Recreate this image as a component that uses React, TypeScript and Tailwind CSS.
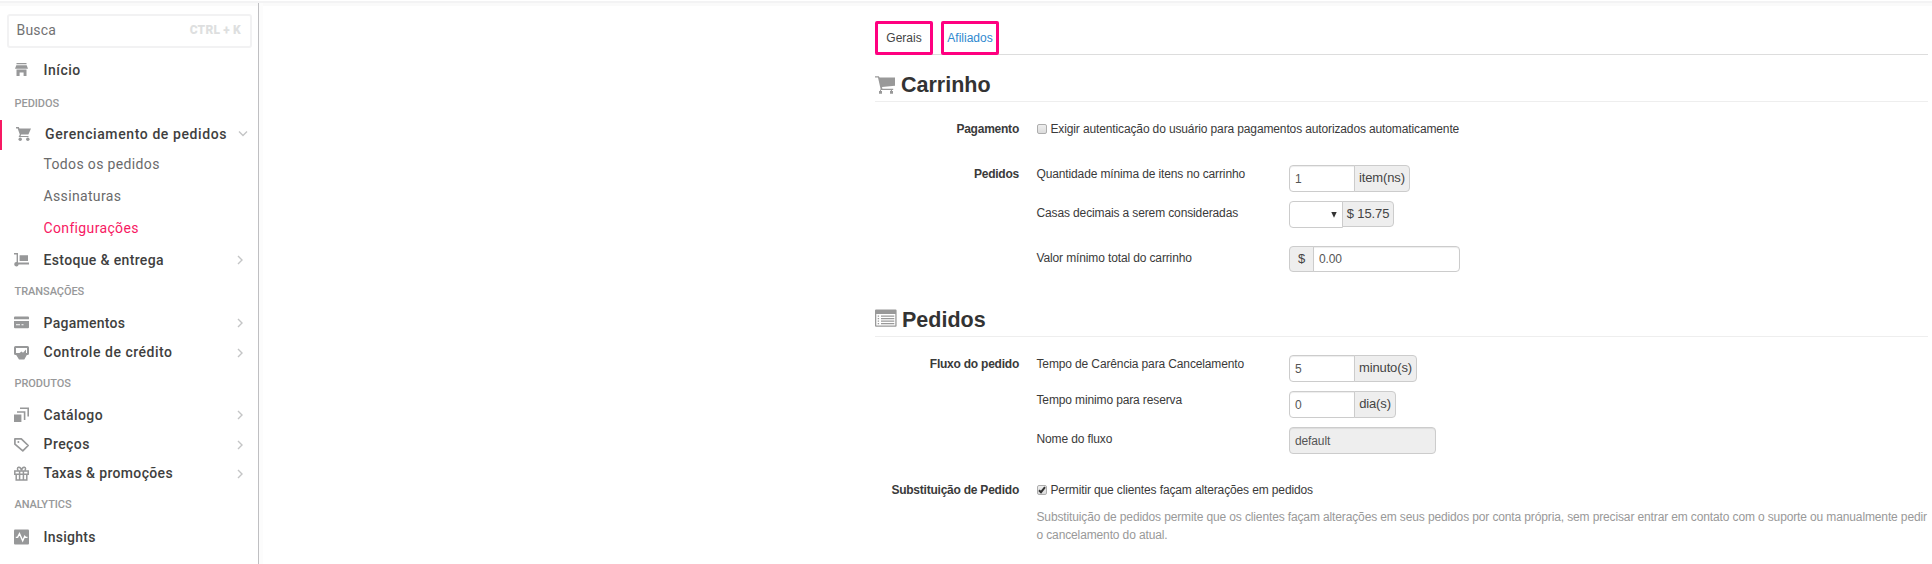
import React from "react";

type IconProps = { children: React.ReactNode };

function Icon({ children }: IconProps) {
  return (
    <svg width="16" height="16" viewBox="0 0 16 16" fill="#979899" className="shrink-0">
      {children}
    </svg>
  );
}

const HomeIcon = (
  <Icon>
    <path d="M2.500 1h10v1.300h-10zM2.300 3.200h10.400l1.300 3.600H1zM2.500 7.600h10V14H9.600v-3.400H5.600V14H2.500z" />
  </Icon>
);
const CartIcon = (
  <Icon>
    <path d="M1 1h2.800l.6 1.600H16l-2.600 5.800H6.200l-.7 1.600h8V11H3.600l1.200-2.600L2.700 2.400H1z" />
    <circle cx="5.200" cy="13.200" r="1.700" />
    <circle cx="12.800" cy="13.200" r="1.700" />
  </Icon>
);
const TrolleyIcon = (
  <Icon>
    <path d="M0 1h4v9.600h11v1.800H4.600a2.200 2.200 0 1 1-2-2.400V2.400H0zM5.600 3.200H14v5.800H5.600z" />
  </Icon>
);
const CardIcon = (
  <Icon>
    <path d="M1 1.500h13a1 1 0 0 1 1 1v1.700H0V2.500a1 1 0 0 1 1-1z" />
    <path fillRule="evenodd" d="M0 6h15v6.200a1 1 0 0 1-1 1H1a1 1 0 0 1-1-1zm2 3.300v.9h4v-.9zm5.500 0v.9h2v-.9z" />
  </Icon>
);
const CreditIcon = (
  <Icon>
    <path
      fillRule="evenodd"
      d="M1.500 1h12A1.500 1.500 0 0 1 15 2.500v6A1.500 1.500 0 0 1 13.500 10h-.7l-2.500 4.500H5L2.200 10h-.7A1.500 1.500 0 0 1 0 8.500v-6A1.500 1.500 0 0 1 1.500 1zM2 3v5h3.500l2-1.600L9 7.800 12 4.600V8h1V3z"
    />
  </Icon>
);
const CatalogIcon = (
  <Icon>
    <path d="M0 7.600h7.400V15H0zM3 4.200h8.400V13H9.800V5.800H3zM6 .4h9V9.600h-1.600V2H6z" />
  </Icon>
);
const TagIcon = (
  <Icon>
    <path d="M.9 1.900h6.400l6.900 6.600-5.400 5.300L.9 7.200z" fill="none" stroke="#979899" strokeWidth="1.700" strokeLinejoin="round" />
    <circle cx="4.400" cy="5" r="1" />
  </Icon>
);
const GiftIcon = (
  <Icon>
    <g fill="none" stroke="#979899" strokeWidth="1.500">
      <path d="M.8 5h13.400v3.200H.8zM2.200 8.200h10.600V14H2.200zM5.600 5v9M9.400 5v9" />
      <path d="M7.500 4.600C7 2 5.800 1 4.600 1.200 3 1.600 3.200 4 4.400 4.700M7.500 4.600C8 2 9.200 1 10.400 1.200 12 1.600 11.800 4 10.600 4.700" />
    </g>
  </Icon>
);
const InsightsIcon = (
  <Icon>
    <rect width="15" height="15" y=".5" rx="1" />
    <path d="M1.800 8.400h1.800l1.900-3.800 3.200 7.200 2-4.600 1 1.200h1.800" fill="none" stroke="#fff" strokeWidth="1.400" />
  </Icon>
);

function Chevron({ down = false }: { down?: boolean }) {
  return (
    <svg width="10" height="10" viewBox="0 0 10 10" fill="none" stroke="#c4c5c6" strokeWidth="1.400" className="shrink-0">
      {down ? <path d="M1 2.500l4 4 4-4" /> : <path d="M3 1l4 4-4 4" />}
    </svg>
  );
}

function NavItem({
  icon,
  label,
  height,
  tracking = "tracking-[0.35px]",
  arrow = false,
}: {
  icon: React.ReactNode;
  label: string;
  height: string;
  tracking?: string;
  arrow?: boolean;
}) {
  return (
    <a className={`flex items-center pl-[14px] pr-[13px] ${height}`}>
      {icon}
      <span className={`ml-[13.5px] grow text-[14px] font-medium text-[#3f3f40] ${tracking}`}>{label}</span>
      {arrow && <Chevron />}
    </a>
  );
}

function NavTitle({ label, height }: { label: string; height: string }) {
  return (
    <div className={`flex items-center pl-[14.5px] text-[11px] font-medium tracking-[-0.05px] text-[#979899] ${height}`}>
      {label}
    </div>
  );
}

function SubItem({ label, height, active = false }: { label: string; height: string; active?: boolean }) {
  return (
    <a
      className={`flex items-center pl-[43.5px] text-[14px] tracking-[0.35px] ${height} ${
        active ? "text-[#f71963]" : "text-[#6a6a6b]"
      }`}
    >
      {label}
    </a>
  );
}

function Sidebar() {
  return (
    <nav className="flex w-[259px] shrink-0 flex-col border-r border-[#bfbfc2] pt-[11px] font-['Roboto',sans-serif]">
      <div className="mr-[6px] ml-[7px] flex h-[34px] shrink-0 items-center justify-between rounded-[3px] border-2 border-[#f2f2f3] bg-white pr-[9px] pb-[2px] pl-[7.5px]">
        <span className="text-[14px] tracking-[0.2px] text-[#727273]">Busca</span>
        <span className="text-[12px] font-black tracking-[0.2px] text-[#dedfe0]">CTRL + K</span>
      </div>
      <div className="h-[7px] shrink-0" />
      <NavItem icon={HomeIcon} label="Início" height="h-[30px]" tracking="tracking-[0.5px]" />
      <NavTitle label="PEDIDOS" height="h-[35px] pt-[3px]" />
      <a className="flex h-[30px] items-center border-l-2 border-[#f71963] pr-[10px] pb-[2px] pl-[13px]">
        {CartIcon}
        <span className="ml-[14px] grow text-[14px] font-medium tracking-[0.6px] whitespace-nowrap text-[#3f3f40]">
          Gerenciamento de pedidos
        </span>
        <Chevron down />
      </a>
      <SubItem label="Todos os pedidos" height="h-[30px] pb-[2px]" />
      <SubItem label="Assinaturas" height="h-[32px]" />
      <SubItem label="Configurações" height="h-[32px]" active />
      <NavItem icon={TrolleyIcon} label="Estoque & entrega" height="h-[32px]" arrow />
      <NavTitle label="TRANSAÇÕES" height="h-[32px]" />
      <NavItem icon={CardIcon} label="Pagamentos" height="h-[30px]" tracking="tracking-[0.28px]" arrow />
      <NavItem icon={CreditIcon} label="Controle de crédito" height="h-[29px]" tracking="tracking-[0.52px]" arrow />
      <NavTitle label="PRODUTOS" height="h-[33px] pt-[2px]" />
      <NavItem icon={CatalogIcon} label="Catálogo" height="h-[30px]" tracking="tracking-[0.4px]" arrow />
      <NavItem icon={TagIcon} label="Preços" height="h-[29px]" tracking="tracking-[0.45px]" arrow />
      <NavItem icon={GiftIcon} label="Taxas & promoções" height="h-[29px]" arrow />
      <NavTitle label="ANALYTICS" height="h-[34px]" />
      <NavItem icon={InsightsIcon} label="Insights" height="h-[30px]" tracking="tracking-[0.25px]" />
    </nav>
  );
}

function SectionTitle({ icon, children }: { icon: React.ReactNode; children: React.ReactNode }) {
  return (
    <h3 className="flex h-[35px] items-center border-b border-[#eeeeee] pt-[2px] text-[21.500px] font-bold text-[#333333]">
      {icon}
      {children}
    </h3>
  );
}

function Group({ children }: { children?: React.ReactNode }) {
  return (
    <div className="w-[144px] shrink-0 text-right leading-[18px] font-bold tracking-[-0.230px] text-[#3a3a3a]">
      {children}
    </div>
  );
}

function Checkbox({ checked = false }: { checked?: boolean }) {
  return (
    <span className="mr-[3.500px] ml-px flex size-[10px] shrink-0 items-center justify-center rounded-[2px] border border-[#adadad] bg-linear-to-b from-[#eeeeee] to-[#dcdcdc]">
      {checked && (
        <svg width="8" height="8" viewBox="0 0 8 8" fill="none" stroke="#333" strokeWidth="2">
          <path d="M1 4.200l2 2L7 1.200" />
        </svg>
      )}
    </span>
  );
}

function Row({
  group = "",
  label,
  height,
  labelOffset = "",
  children,
}: {
  group?: string;
  label: string;
  height: string;
  labelOffset?: string;
  children?: React.ReactNode;
}) {
  return (
    <div className={`flex items-start ${height}`}>
      <Group>{group}</Group>
      <div className={`ml-[17.5px] w-[252.5px] shrink-0 leading-[18px] ${labelOffset}`}>{label}</div>
      {children}
    </div>
  );
}

function NumberField({ value, unit, unitWidth }: { value: string; unit: string; unitWidth: string }) {
  return (
    <>
      <div className="flex h-[27px] w-[66px] items-center rounded-l-[4px] border border-[#cccccc] pl-[5px] text-[#555] shadow-[inset_0_1px_1px_rgba(0,0,0,0.075)]">
        {value}
      </div>
      <div
        className={`-ml-px flex h-[27px] items-center justify-center rounded-r-[4px] border border-[#cccccc] bg-[#eeeeee] pb-px text-[13px] text-[#444] ${unitWidth}`}
      >
        {unit}
      </div>
    </>
  );
}

const BigCart = (
  <svg width="21" height="18" viewBox="0 0 21 18" fill="#999999" className="mr-[5px] shrink-0">
    <path d="M0 .3h3.800l.8 1.200H20v8.300L7 11l.4 1.700h10.800V14H17v1h1v2.700h-3V15h.8v-1H6v1h1v2.700H4V15h.8l.8-2L3 1.600H0z" />
  </svg>
);

const BigList = (
  <svg width="22" height="18" viewBox="0 0 22 18" fill="#999999" className="mr-[5px] mb-[4px] shrink-0">
    <path
      fillRule="evenodd"
      d="M1 .5h19.600a1 1 0 0 1 1 1v15.200a1 1 0 0 1-1 1H1a1 1 0 0 1-1-1V1.500a1 1 0 0 1 1-1zM1.300 5v11.400h19V5z"
    />
    <path d="M2.700 6.500h1.400v1.200H2.700zM6 6.500h13.300v1.200H6zM2.700 9h1.400v1.200H2.700zM6 9h13.300v1.200H6zM2.700 11.500h1.400v1.200H2.700zM6 11.500h13.300v1.200H6zM2.700 14h1.400v1.200H2.700zM6 14h13.300v1.200H6z" />
  </svg>
);

function Tabs() {
  return (
    <div className="flex h-[34px] items-stretch gap-[8px] border-b border-[#dddddd]">
      <a className="-mb-px flex w-[58px] items-center justify-center rounded-[2px] border-[3px] border-[#ff0080] bg-white text-[#444]">
        Gerais
      </a>
      <a className="-mb-px flex w-[58px] items-center justify-center rounded-[2px] border-[3px] border-[#ff0080] text-[#3089cf]">
        Afiliados
      </a>
    </div>
  );
}

function Settings() {
  return (
    <main className="w-[1053px] shrink-0 pt-[18px] font-['Liberation_Sans',Arial,sans-serif] text-[12px] text-[#3a3a3a]">
      <Tabs />
      <div className="h-[12px]" />
      <SectionTitle icon={BigCart}>Carrinho</SectionTitle>
      <div className="tracking-[-0.130px]">
        <div className="flex pt-[18px] leading-[18px]">
          <Group>Pagamento</Group>
          <div className="ml-[17px] flex items-center">
            <Checkbox />
            Exigir autenticação do usuário para pagamentos autorizados automaticamente
          </div>
        </div>
        <div className="h-[27px]" />
        <Row group="Pedidos" label="Quantidade mínima de itens no carrinho" height="h-[36px]">
          <NumberField value="1" unit="item(ns)" unitWidth="w-[56px]" />
        </Row>
        <Row label="Casas decimais a serem consideradas" height="h-[45px]" labelOffset="mt-[3px]">
          <div className="flex h-[27px] w-[54px] items-center justify-end rounded-l-[4px] border border-[#cccccc] pr-[5px]">
            <svg width="6" height="6" viewBox="0 0 6 6" fill="#333">
              <path d="M.3 0h5.400L3 5.700z" />
            </svg>
          </div>
          <div className="-ml-px flex h-[26px] w-[52px] items-center justify-center rounded-r-[4px] border border-[#cccccc] bg-[#eeeeee] pb-px text-[13px] text-[#444]">
            $ 15.75
          </div>
        </Row>
        <Row label="Valor mínimo total do carrinho" height="h-[56px]" labelOffset="mt-[3px]">
          <div className="flex h-[26px] w-[25px] items-center justify-center rounded-l-[4px] border border-[#cccccc] bg-[#eeeeee] pb-px text-[13px] text-[#444]">
            $
          </div>
          <div className="-ml-px flex h-[26px] w-[147px] items-center rounded-r-[4px] border border-[#cccccc] pl-[5px] text-[#555] shadow-[inset_0_1px_1px_rgba(0,0,0,0.075)]">
            0.00
          </div>
        </Row>
      </div>
      <SectionTitle icon={BigList}>Pedidos</SectionTitle>
      <div className="tracking-[-0.130px]">
        <div className="h-[18px]" />
        <Row group="Fluxo do pedido" label="Tempo de Carência para Cancelamento" height="h-[36px]">
          <NumberField value="5" unit="minuto(s)" unitWidth="w-[63px]" />
        </Row>
        <Row label="Tempo minimo para reserva" height="h-[36px]">
          <NumberField value="0" unit="dia(s)" unitWidth="w-[42px]" />
        </Row>
        <Row label="Nome do fluxo" height="h-[54px]" labelOffset="mt-[3px]">
          <div className="flex h-[27px] w-[147px] items-center rounded-[4px] border border-[#cccccc] bg-[#eeeeee] pl-[5px] text-[#555] shadow-[inset_0_1px_1px_rgba(0,0,0,0.075)]">
            default
          </div>
        </Row>
        <div className="flex leading-[18px]">
          <Group>Substituição de Pedido</Group>
          <div className="ml-[17px] flex items-center">
            <Checkbox checked />
            Permitir que clientes façam alterações em pedidos
          </div>
        </div>
        <p className="mt-[9px] ml-[161.5px] leading-[18px] whitespace-nowrap text-[#999999]">
          Substituição de pedidos permite que os clientes façam alterações em seus pedidos por conta própria, sem
          precisar entrar em contato com o suporte ou manualmente pedir
          <br />o cancelamento do atual.
        </p>
      </div>
    </main>
  );
}

export default function App() {
  return (
    <div className="flex h-[564px] w-[1932px] flex-col overflow-hidden bg-white">
      <div className="h-[3px] shrink-0 border-b-2 border-[#f3f3f4]" />
      <div className="-mb-[3px] h-[3px] shrink-0 bg-[#fafafa]" />
      <div className="flex grow">
        <Sidebar />
        <div className="w-[4px] shrink-0 bg-[#fcfcfc]" />
        <div className="flex grow pl-[612px]">
          <Settings />
        </div>
      </div>
    </div>
  );
}
